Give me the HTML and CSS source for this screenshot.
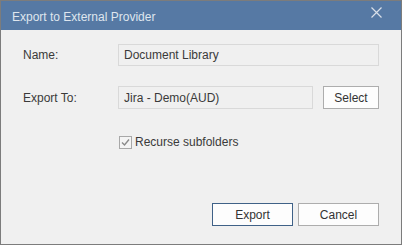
FILE: index.html
```html
<!DOCTYPE html>
<html lang="en">
<head>
    <meta charset="UTF-8">
    <title>Export to External Provider</title>
    <link rel="stylesheet" href="styles.css">
</head>
<body>
    <div class="dialog">
        <div class="titlebar">
            <span class="title">Export to External Provider</span>
            <svg class="close" width="11" height="11" viewBox="0 0 11 11">
                <path d="M0.5 0.5 L10.5 10.5 M10.5 0.5 L0.5 10.5" stroke="#d8dfe8" stroke-width="1.2" fill="none"/>
            </svg>
        </div>
        <div class="content">
            <div class="row row-name">
                <label class="label">Name:</label>
                <div class="field field-wide">Document Library</div>
            </div>
            <div class="row row-export">
                <label class="label">Export To:</label>
                <div class="field field-short">Jira - Demo(AUD)</div>
                <button class="btn btn-select">Select</button>
            </div>
            <div class="check-row">
                <span class="checkbox">
                    <svg width="9" height="9" viewBox="0 0 9 9">
                        <path d="M1 4.5 L3.5 7 L8 1.5" stroke="#8a8a8a" stroke-width="1.4" fill="none"/>
                    </svg>
                </span>
                <span class="check-label">Recurse subfolders</span>
            </div>
            <div class="buttons">
                <button class="btn btn-default">Export</button>
                <button class="btn">Cancel</button>
            </div>
        </div>
    </div>
</body>
</html>
```
FILE: styles.css
```css
body { margin: 0; font-family: "Liberation Sans", Arial, sans-serif; font-size: 12px; color: #333; }
.dialog { width: 400px; height: 243px; border: 1px solid #7c7c7c; display: flex; flex-direction: column; background: #f0f0f0; }
.titlebar { height: 29px; background: #5679a4; display: flex; align-items: center; justify-content: space-between; padding: 0 19px 0 11px; }
.title { color: #dfe6ee; font-size: 12px; margin-top: 3px; }
.close { margin-top: -7px; }
.content { flex: 1; padding: 14px 22px 0 22px; display: flex; flex-direction: column; }
.row { display: flex; align-items: center; }
.label { width: 95px; color: #3a3a3a; }
.field { height: 20px; border: 1px solid #d9d9d9; background: #f0f0f0; padding-left: 5px; display: flex; align-items: center; color: #3a3a3a; box-sizing: content-box; }
.field-wide { width: 254px; }
.field-short { width: 188px; height: 21px; }
.row-export { margin-top: 20px; }
.btn { font-family: inherit; font-size: 12px; color: #333; background: #fdfdfd; border: 1px solid #adadad; padding: 0; height: 23px; }
.btn-select { width: 56px; margin-left: 10px; }
.check-row { display: flex; align-items: center; margin-top: 26px; padding-left: 96px; }
.checkbox { width: 11px; height: 11px; border: 1px solid #a8a8a8; background: #f4f4f4; display: flex; align-items: center; justify-content: center; }
.check-label { margin-left: 3px; color: #3a3a3a; }
.buttons { display: flex; justify-content: flex-end; gap: 5px; margin-top: 54px; }
.buttons .btn { width: 81px; }
.btn-default { border-color: #3f6187; }
```
